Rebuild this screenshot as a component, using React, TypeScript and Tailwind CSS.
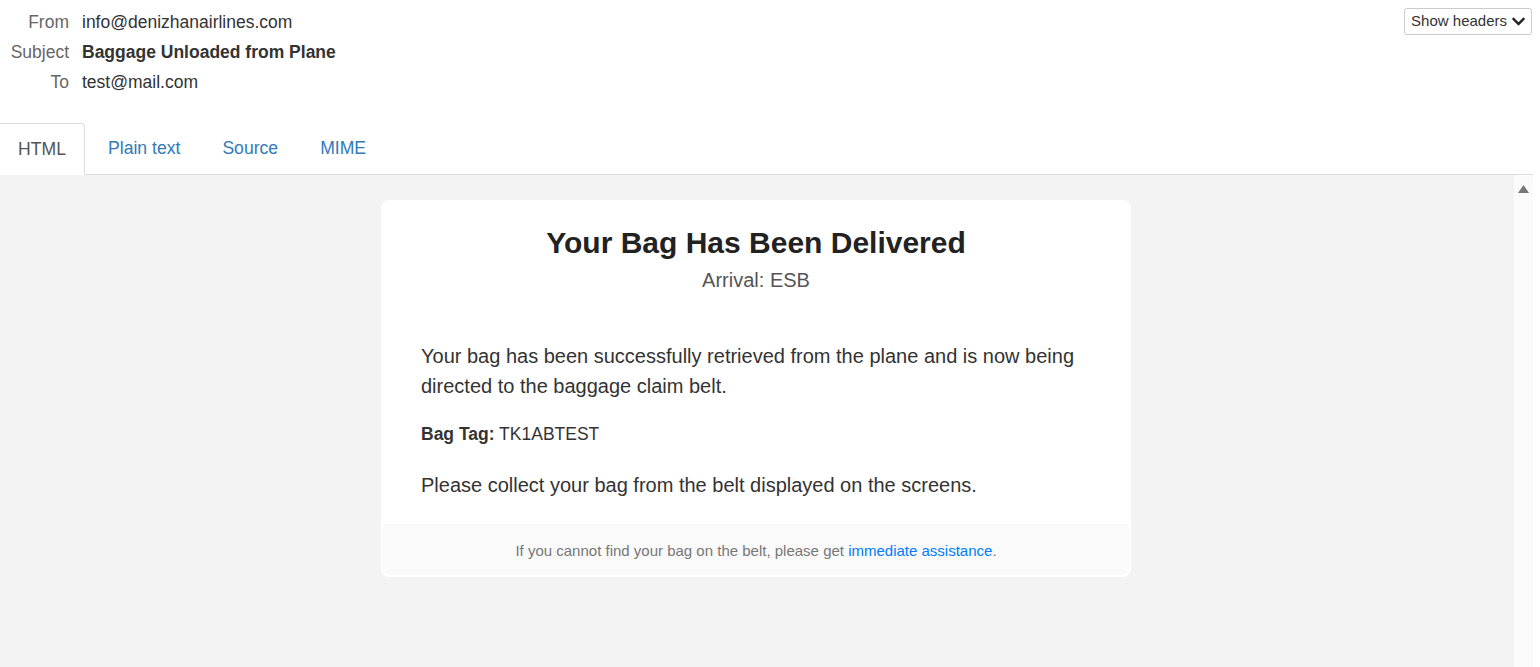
import { FaChevronDown } from 'react-icons/fa'

const font = { fontFamily: '"Liberation Sans", Arial, sans-serif' }

function HeaderRow({ label, children }: { label: string; children: React.ReactNode }) {
  return (
    <div className="flex h-[30px] items-center">
      <div className="w-[70px] pr-[1px] text-right text-[#666]">{label}</div>
      <div className="pl-[12px] text-[#333]">{children}</div>
    </div>
  )
}

export default function App() {
  return (
    <div className="flex h-[667px] w-[1540px] flex-col overflow-hidden bg-white text-[17.5px]" style={font}>
      <div className="relative pt-[7px]">
        <HeaderRow label="From">info@denizhanairlines.com</HeaderRow>
        <HeaderRow label="Subject">
          <span className="font-bold">Baggage Unloaded from Plane</span>
        </HeaderRow>
        <HeaderRow label="To">test@mail.com</HeaderRow>
        <button className="absolute right-[8px] top-[8px] flex h-[27px] items-center gap-[4px] rounded-[3px] border border-[#ccc] bg-white pl-[6px] pr-[5px] text-[15px] text-[#333]">
          Show headers
          <FaChevronDown className="h-[15px] w-[15px] text-[#222]" />
        </button>
      </div>

      <div className="mt-[26px] flex h-[52px] w-[1533px] items-end border-b border-[#ddd] text-[17.6px]">
        <div className="-mb-px flex h-[52px] w-[85px] items-center justify-center rounded-tr-[4px] border border-l-0 border-[#ddd] border-b-white bg-white text-[#555]">
          HTML
        </div>
        <div className="ml-[2px] flex h-[51px] items-center px-[21px] text-[#337ab7]">Plain text</div>
        <div className="flex h-[51px] items-center px-[21px] text-[#337ab7]">Source</div>
        <div className="flex h-[51px] items-center px-[21px] text-[#337ab7]">MIME</div>
      </div>

      <div className="flex w-[1533px] flex-1">
        <div className="flex flex-1 justify-center bg-[#f3f3f3] pt-[25px]">
          <div className="-ml-[2px] h-fit w-[750px] rounded-[8px] bg-white p-[2px]">
            <div className="px-[38px] pt-[22px] text-center">
              <h1 className="text-[30px] font-bold leading-[38px] text-[#222]">Your Bag Has Been Delivered</h1>
              <p className="mt-[6px] text-[20px] leading-[24px] text-[#555]">Arrival: ESB</p>
            </div>
            <div className="px-[38px] pb-[27px] pt-[49px] text-[#333]">
              <p className="text-[20px] leading-[30px]">
                Your bag has been successfully retrieved from the plane and is now being directed to the baggage claim
                belt.
              </p>
              <p className="mt-[22px] text-[17.5px] leading-[22px]">
                <span className="font-bold">Bag Tag:</span> TK1ABTEST
              </p>
              <p className="mt-[28px] text-[20px] leading-[24px]">Please collect your bag from the belt displayed on the screens.</p>
            </div>
            <div className="flex h-[51px] items-center justify-center rounded-b-[7px] bg-[#fafafa] pt-[3px] text-[15px] text-[#777]">
              <span>
                If you cannot find your bag on the belt, please get{' '}
                <span className="text-[#007bff]">immediate assistance</span>.
              </span>
            </div>
          </div>
        </div>
        <div className="flex w-[19px] justify-center bg-[#fbfbfb] pt-[10px]">
          <svg width="11" height="8" viewBox="0 0 11 8">
            <path d="M5.5 0 L11 8 L0 8 Z" fill="#777" />
          </svg>
        </div>
      </div>
    </div>
  )
}
